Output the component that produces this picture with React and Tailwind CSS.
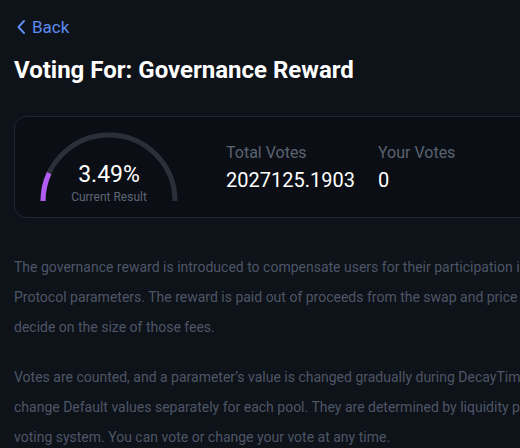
import React from 'react'

// Voting details page: header, result card with gauge, description

function Gauge({ percent }) {
  // semicircle track with a short purple segment for the current result
  const r = 66
  const cx = 70
  const cy = 70
  const angle = Math.PI - (25 * Math.PI) / 180
  const ex = cx + r * Math.cos(angle)
  const ey = cy - r * Math.sin(angle)
  return (
    <div className="relative w-[140px] h-[72px] shrink-0">
      <svg width="140" height="72" viewBox="0 0 140 72" className="absolute inset-0">
        <path d={`M ${cx - r} ${cy} A ${r} ${r} 0 0 1 ${cx + r} ${cy}`} fill="none" stroke="#2a2f39" strokeWidth="5" />
        <path d={`M ${cx - r} ${cy} A ${r} ${r} 0 0 1 ${ex} ${ey}`} fill="none" stroke="#b35cf2" strokeWidth="5" />
      </svg>
      <div className="absolute inset-x-0 top-[30px] flex flex-col items-center">
        <span className="text-[23px] leading-[28px] text-white">{percent}%</span>
        <span className="text-[12px] leading-[16px] text-[#5d6676]">Current Result</span>
      </div>
    </div>
  )
}

function Stat({ label, value, className }) {
  return (
    <div className={className}>
      <div className="text-[16px] leading-[20px] text-[#5a6271]">{label}</div>
      <div className="text-[20px] leading-[26px] text-white mt-[4px]">{value}</div>
    </div>
  )
}

export default function App() {
  return (
    <div className="w-[520px] h-[448px] overflow-hidden bg-[#0e1219]" style={{ fontFamily: 'Roboto, "Liberation Sans", sans-serif' }}>
      <div className="w-[760px] pl-[14px] pt-[16px]">
        <button className="flex items-center gap-[6px] text-[#5b8cf0] text-[17px] leading-[22px] pl-[2px]">
          <svg width="10" height="16" viewBox="0 0 10 16" fill="none">
            <path d="M8 2 L2.5 8 L8 14" stroke="#5b8cf0" strokeWidth="2" strokeLinecap="round" strokeLinejoin="round" />
          </svg>
          Back
        </button>

        <h1 className="mt-[17px] text-[24px] leading-[30px] font-bold text-white">Voting For: Governance Reward</h1>

        <div className="mt-[31px] h-[102px] rounded-[12px] border border-[#1f2633] bg-[#0b0f15] flex items-start pl-[24px]">
          <div className="pt-[14px]">
            <Gauge percent="3.49" />
          </div>
          <Stat className="ml-[47px] w-[152px] pt-[26px]" label="Total Votes" value="2027125.1903" />
          <Stat className="pt-[26px]" label="Your Votes" value="0" />
        </div>

        <div className="mt-[34px] text-[14px] leading-[30px] text-[#4d5666]">
          <p>
            The governance reward is introduced to compensate users for their participation in voting for<br />
            Protocol parameters. The reward is paid out of proceeds from the swap and price impact fees. Users<br />
            decide on the size of those fees.
          </p>
          <p className="mt-[20px]">
            Votes are counted, and a parameter’s value is changed gradually during DecayTime. Users can<br />
            change Default values separately for each pool. They are determined by liquidity providers via the<br />
            voting system. You can vote or change your vote at any time.
          </p>
        </div>
      </div>
    </div>
  )
}
